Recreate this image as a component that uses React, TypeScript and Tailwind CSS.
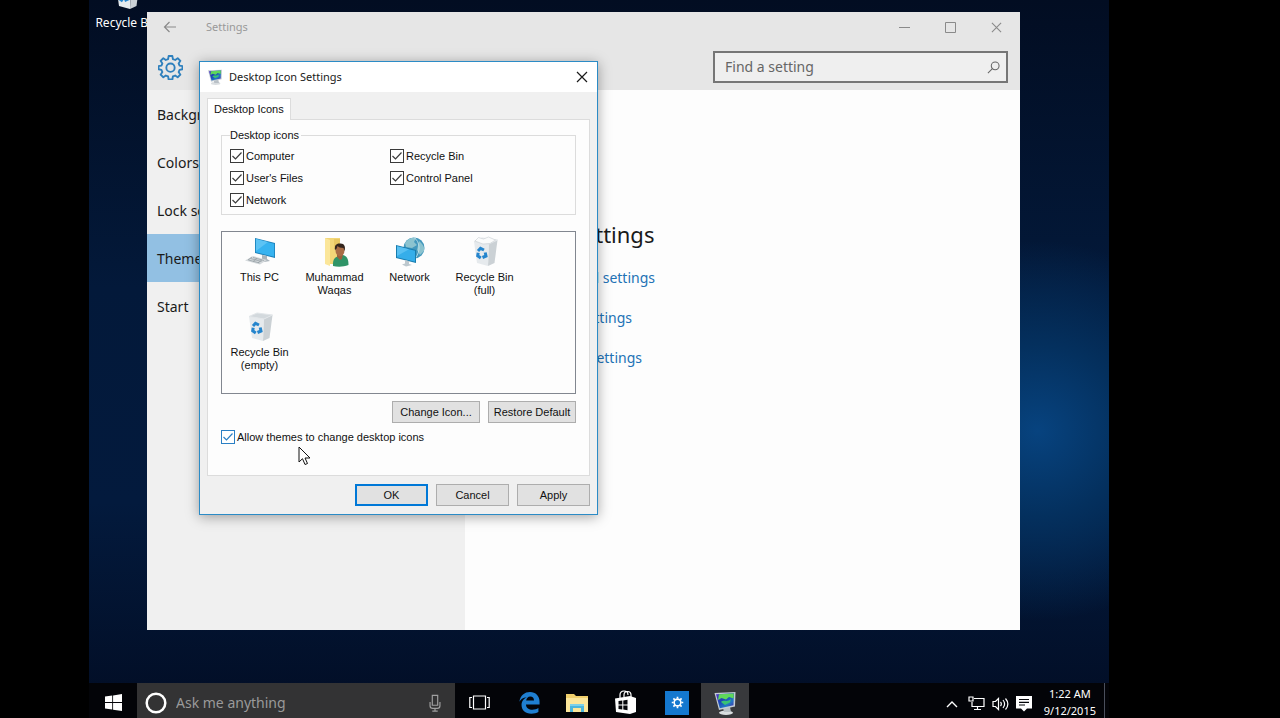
import type { ReactNode } from 'react';

const ui = "font-['Noto_Sans',sans-serif]";
const dlg = "font-['Liberation_Sans',Arial,sans-serif]";

function GearIcon({ className, width = 1.6 }: { className: string; width?: number }) {
  return (
    <svg viewBox="0 0 24 24" className={className} fill="none" stroke="currentColor" strokeWidth={width} strokeLinejoin="round">
      <path d="M10.2 1h3.6l.5 2.9 2.2.9L18.900 3.100l2.600 2.500-1.700 2.500.9 2.100 2.800.5v3.000l-2.800.600-.9 2.100 1.700 2.500-2.600 2.500-2.400-1.700-2.200.9-.5 2.900h-3.600l-.5-2.900-2.200-.9-2.400 1.700-2.600-2.500 1.700-2.500-.9-2.100-2.800-.6v-3l2.800-.5.900-2.100-1.700-2.500 2.600-2.500 2.400 1.700 2.200-.9z" />
      <circle cx="12" cy="12.200" r="4" />
    </svg>
  );
}

function SmallGearIcon({ className }: { className: string }) {
  return (
    <svg viewBox="0 0 14 14" className={className} fill="none" stroke="currentColor">
      <circle cx="7" cy="7" r="3.600" strokeWidth="1.700" />
      <path d="M7 .8v2M7 11.200v2M.8 7h2M11.200 7h2M2.600 2.600l1.500 1.500M9.900 9.900l1.500 1.500M11.400 2.600L9.900 4.100M4.100 9.900l-1.500 1.500" strokeWidth="1.800" />
    </svg>
  );
}

function DisplayIcon({ className }: { className: string }) {
  return (
    <svg viewBox="0 0 24 24" className={className}>
      <defs>
        <linearGradient id="disp" x1="0" y1="0" x2="1" y2="1">
          <stop offset="0" stopColor="#5a35c8" />
          <stop offset=".4" stopColor="#1c46b4" />
          <stop offset=".7" stopColor="#2277c4" />
          <stop offset="1" stopColor="#4a20a4" />
        </linearGradient>
      </defs>
      <ellipse cx="13" cy="21.700" rx="7" ry="2.200" fill="#d9dde0" />
      <path d="M10 17l7-1 1 5h-7z" fill="#b9c0c6" />
      <path d="M1.500 2L22.500 1l-.5 14.500L6 19z" fill="#c3ccd4" />
      <path d="M3 3.200l18-.9-.5 12L6.800 17.300z" fill="url(#disp)" />
      <path d="M6 3.200l14.800-.8-.3 5-4.500-1.400-3 2.500-4.500-1.500L5 9z" fill="#5fd85a" />
      <path d="M8 11c3-3 6 1 10-3l-1 3.500-5 2.500z" fill="#39c274" />
    </svg>
  );
}

function PcIcon() {
  return (
    <svg viewBox="0 0 32 32" className="size-8">
      <path d="M11 2l20 5v15l-20-5z" fill="#1b7fb8" />
      <path d="M11.800 3l18.400 4.700v13l-18.400-4.400z" fill="#37b3f0" />
      <path d="M12 3l12 3-12 9z" fill="#5cc3f4" />
      <path d="M18 19l5 1v3l3 2-6 1-4-2 2-1z" fill="#aab4bb" />
      <path d="M9 20l14 4-7 4.500L1 24.500z" fill="#d4d9dc" />
      <path d="M9 21.500l11 3M6.500 22.500l11 3M4.500 24l11 3M8 21l-4 3M13 22.500l-4 3M18 23.800l-4 3" stroke="#8f999f" strokeWidth=".7" />
    </svg>
  );
}

function UserFolderIcon() {
  return (
    <svg viewBox="0 0 32 32" className="size-8">
      <path d="M6 2h15v26H6z" fill="#f2d678" />
      <path d="M6 2l5 2v26l-5-2z" fill="#fbe69a" />
      <path d="M15 3h6v8h-6z" fill="#e8c762" />
      <path d="M14 30c-.5-7 2-9 6-10l4-1c4 1 5.500 4 5.500 10-5 2-11 2-15.500 1z" fill="#2f9467" />
      <path d="M18 18h6l-1 5-2 1-3-3z" fill="#9a603c" />
      <ellipse cx="21" cy="14.500" rx="4.500" ry="5.800" fill="#a86c45" />
      <path d="M16 14c-1-5 2-7 5-6.500 4-.5 6 3 4.500 7.500l-1-3c-3 0-5-1-6-2-.5 2-1 3-2.500 4z" fill="#33251d" />
    </svg>
  );
}

function NetworkIcon() {
  return (
    <svg viewBox="0 0 32 32" className="size-8">
      <circle cx="20" cy="12" r="10.500" fill="#4398bd" />
      <path d="M11 7c3-5 8-6 11-5l-2 4 3 3-5 3-6-1zM25 5c4 3 6 7 5 10l-4 4-3-5z" fill="#8cc3cf" />
      <path d="M20 1.500c6 4 7 14 1 21" stroke="#c7e6ef" strokeWidth=".8" fill="none" />
      <path d="M2 9l20 5v13L2 22z" fill="#187cad" />
      <path d="M3 10.200l18 4.600v11L3 21.200z" fill="#35aeea" />
      <path d="M3 10.200l12 3L3 20z" fill="#58c0f2" />
      <path d="M11 24l4 1v3l3 1-6 1.500-4-2 3-1z" fill="#bdc8ce" />
    </svg>
  );
}

function BinIcon({ full = false }: { full?: boolean }) {
  return (
    <svg viewBox="0 0 32 32" className="size-8">
      <path d="M5 5.500l15 2.500-1 22-11-3z" fill="#e6eaed" />
      <path d="M20 8l8.500-4-3 23-6.500 3z" fill="#cbd1d5" />
      <path d="M5 5.500l8-3.500 15.500 2-8.500 4z" fill={full ? '#f7f8f9' : '#d3d9dd'} stroke="#e2e6e9" strokeWidth="1" />
      {full && <path d="M6 5l3.500-3.500 5 1.500 5-2 7 3-5.500 3.500-7 .500z" fill="#fafbfb" stroke="#c6cdd2" strokeWidth=".6" />}
      <g fill="none" stroke="#2585cd" strokeWidth="3">
        <path d="M9 15l2.500-2.700 3.500 1.700" />
        <path d="M16.200 16.500l.8 3.500-3.500 1.500" />
        <path d="M11.800 22l-3.100-2.200.5-3" />
      </g>
    </svg>
  );
}

function CloseIcon({ className }: { className: string }) {
  return (
    <svg viewBox="0 0 12 12" className={className} stroke="currentColor" strokeWidth="1.200">
      <path d="M1 1l10 10M11 1L1 11" />
    </svg>
  );
}

function Check({ label, themed = false }: { label: string; themed?: boolean }) {
  return (
    <label className="flex h-4 items-center gap-0.5 whitespace-nowrap">
      <span className="grid size-[14px] shrink-0">
        <input
          type="checkbox"
          defaultChecked
          className={`peer col-start-1 row-start-1 m-0 size-[14px] appearance-none border bg-white ${themed ? 'border-[#2a7fc4]' : 'border-[#3a3a3a]'}`}
        />
        <svg
          viewBox="0 0 14 14"
          className={`pointer-events-none invisible col-start-1 row-start-1 size-[14px] peer-checked:visible ${themed ? 'text-[#2a7fc4]' : 'text-[#3a3a3a]'}`}
          fill="none"
          stroke="currentColor"
          strokeWidth="1.200"
        >
          <path d="M2.500 7l3 3 6-6.500" />
        </svg>
      </span>
      {label}
    </label>
  );
}

function IconTile({ icon, children }: { icon: ReactNode; children: ReactNode }) {
  return (
    <li className="flex h-[75px] w-[75px] flex-col items-center gap-[3px] text-center leading-[13px]">
      {icon}
      <span>{children}</span>
    </li>
  );
}

function DialogButton({ children, className }: { children: ReactNode; className: string }) {
  return <button className={`h-[22px] bg-[#e1e1e1] text-center ${className}`}>{children}</button>;
}

function IconSettingsDialog() {
  return (
    <section
      aria-label="Desktop Icon Settings"
      className={`absolute top-[61px] left-[110px] flex w-[399px] flex-col border border-[#2b8bc6] bg-[#f0f0f0] text-[11px] text-[#111] shadow-[0_2px_12px_rgba(0,0,0,0.35)] ${dlg}`}
    >
      <header className={`flex h-[30px] items-center bg-white px-[7px] text-[#1a1a1a] ${ui}`}>
        <DisplayIcon className="size-4" />
        <h2 className="ml-1.5 flex-1">Desktop Icon Settings</h2>
        <button aria-label="Close" className="px-0.5">
          <CloseIcon className="size-3" />
        </button>
      </header>
      <div className="flex flex-col px-[7px] pt-1.5">
        <div role="tablist" className="flex">
          <button role="tab" aria-selected="true" className="z-10 -mb-px h-[22px] border border-b-0 border-[#dcdcdc] bg-white px-1.5">
            Desktop Icons
          </button>
        </div>
        <div className="flex h-[357px] flex-col border border-[#dcdcdc] bg-[#fdfdfd] px-[13px] pt-[9px]">
          <fieldset className="h-[86px] border border-[#dcdcdc] px-2">
            <legend className="pr-0.5 leading-3">Desktop icons</legend>
            <div className="grid grid-cols-[160px_1fr] gap-y-1.5 pt-[7px]">
              <Check label="Computer" />
              <Check label="Recycle Bin" />
              <Check label="User's Files" />
              <Check label="Control Panel" />
              <Check label="Network" />
            </div>
          </fieldset>
          <ul className="mt-4 flex h-[163px] flex-wrap content-start border border-[#828790] pt-1">
            <IconTile icon={<PcIcon />}>This PC</IconTile>
            <IconTile icon={<UserFolderIcon />}>Muhammad Waqas</IconTile>
            <IconTile icon={<NetworkIcon />}>Network</IconTile>
            <IconTile icon={<BinIcon full />}>Recycle Bin (full)</IconTile>
            <IconTile icon={<BinIcon />}>Recycle Bin (empty)</IconTile>
          </ul>
          <div className="mt-[7px] flex justify-end gap-2">
            <DialogButton className="w-[88px] border border-[#adadad]">Change Icon...</DialogButton>
            <DialogButton className="w-[88px] border border-[#adadad]">Restore Default</DialogButton>
          </div>
          <div className="mt-1.5">
            <Check label="Allow themes to change desktop icons" themed />
          </div>
        </div>
        <footer className="flex justify-end gap-2 py-2">
          <DialogButton className="w-[73px] border-2 border-[#0078d7]">OK</DialogButton>
          <DialogButton className="w-[73px] border border-[#adadad]">Cancel</DialogButton>
          <DialogButton className="w-[73px] border border-[#adadad]">Apply</DialogButton>
        </footer>
      </div>
    </section>
  );
}

const navItems = ['Background', 'Colors', 'Lock screen', 'Themes', 'Start'];

function SettingsWindow() {
  return (
    <section aria-label="Settings" className={`absolute top-3 right-[89px] bottom-[88px] left-[58px] flex flex-col bg-[#fdfdfd] ${ui}`}>
      <header className="flex h-[78px] shrink-0 flex-col bg-[#e6e6e6]">
        <div className="flex h-[30px] items-center text-[#8a8a8a]">
          <button aria-label="Back" className="ml-4">
            <svg viewBox="0 0 14 14" className="size-[14px]" fill="none" stroke="currentColor" strokeWidth="1.200">
              <path d="M13 7H1.500M6.500 2l-5 5 5 5" />
            </svg>
          </button>
          <h1 className="ml-[29px] flex-1 text-[11px] text-[#999]">Settings</h1>
          <div className="flex items-center gap-[35px] pr-[18px]">
            <button aria-label="Minimize">
              <svg viewBox="0 0 11 11" className="size-[11px]" stroke="currentColor">
                <path d="M0 5.500h11" />
              </svg>
            </button>
            <button aria-label="Maximize">
              <svg viewBox="0 0 11 11" className="size-[11px]" fill="none" stroke="currentColor">
                <path d="M.5.5h10v10H.5z" />
              </svg>
            </button>
            <button aria-label="Close">
              <CloseIcon className="size-[11px]" />
            </button>
          </div>
        </div>
        <div className="flex flex-1 items-start justify-between pr-3 pl-[11px]">
          <GearIcon className="mt-[13px] size-[25px] text-[#2f80bd]" width={1.800} />
          <div className="mt-[9px] flex h-8 w-[295px] items-center border-2 border-[#767676] bg-[#efefef] pr-1.5 pl-2.5">
            <input aria-label="Find a setting" placeholder="Find a setting" className="min-w-0 flex-1 bg-transparent text-sm outline-none placeholder:text-[#666]" />
            <svg viewBox="0 0 14 14" className="size-[13px] text-[#666]" fill="none" stroke="currentColor" strokeWidth="1.100">
              <circle cx="8.800" cy="5.200" r="4.200" />
              <path d="M5.800 8.200L1 13" />
            </svg>
          </div>
        </div>
      </header>
      <div className="flex flex-1">
        <nav className="w-[318px] bg-[#f0f0f0] text-sm text-[#1a1a1a]">
          {navItems.map((item) => (
            <a key={item} href="#" className={`flex h-12 items-center px-2.5 pt-0.5 ${item === 'Themes' ? 'bg-[#92c0e3]' : ''}`}>
              {item}
            </a>
          ))}
        </nav>
        <main className="flex flex-1 flex-col items-start pt-32 pl-[22px] text-sm text-[#2372b5]">
          <h2 className="w-[166px] text-right text-[22px] leading-8 whitespace-nowrap text-[#1a1a1a]">Related Settings</h2>
          <a href="#" className="mt-[18px] flex h-5 w-[168px] items-center justify-end whitespace-nowrap">Advanced sound settings</a>
          <a href="#" className="mt-5 flex h-5 w-[145px] items-center justify-end whitespace-nowrap">Desktop icon settings</a>
          <a href="#" className="mt-5 flex h-5 w-[155px] items-center justify-end whitespace-nowrap">Mouse pointer settings</a>
        </main>
      </div>
    </section>
  );
}

function Taskbar() {
  return (
    <footer className={`absolute inset-x-0 bottom-0 flex h-[35px] items-stretch bg-[#030408] text-white ${ui}`}>
      <button aria-label="Start" className="flex w-12 items-center justify-center pt-1">
        <svg viewBox="0 0 16 16" className="size-[17px]" fill="currentColor">
          <path d="M0 2.300L6.800 1.400v6.200H0zM7.600 1.300L16 0v7.600H7.600zM0 8.400h6.800v6.200L0 13.700zM7.600 8.400H16V16l-8.400-1.200z" />
        </svg>
      </button>
      <div className="flex w-[318px] items-center bg-[#333334] pt-1 pr-3 pl-2">
        <svg viewBox="0 0 22 22" className="size-[22px]" fill="none" stroke="currentColor" strokeWidth="2.500">
          <circle cx="11" cy="11" r="9.300" />
        </svg>
        <input aria-label="Ask me anything" placeholder="Ask me anything" className="ml-[9px] min-w-0 flex-1 bg-transparent text-sm outline-none placeholder:text-[#9a9a9a]" />
        <svg viewBox="0 0 16 20" className="h-[18px] w-4 text-[#a0a0a0]" fill="none" stroke="currentColor" strokeWidth="1.300">
          <path d="M5 1.500h6v11H5zM2.500 9v4c0 2 1.500 3 3 3h5c1.500 0 3-1 3-3V9M8 16v3M5 19h6" />
        </svg>
      </div>
      <div className="flex items-stretch">
        <button aria-label="Task View" className="flex w-12 items-center justify-center pt-1">
          <svg viewBox="0 0 21 15" className="h-[15px] w-[21px]" fill="none" stroke="currentColor" strokeWidth="1.200">
            <path d="M4.500 1h12v13h-12zM3 2.500H.8v10H3M18 2.500h2.200v10H18" />
          </svg>
        </button>
        <button aria-label="Edge" className="flex w-[52px] items-center justify-center pt-1">
          <svg viewBox="0 0 24 24" className="size-[23px]" fill="#1f7fd1">
            <path d="M1.500 11.200C2.300 4.500 7 1 12.500 1 18.500 1 22.500 5.300 22.500 11v3H8.300c.2 4 3.300 5.500 6.600 5.500 2.500 0 4.600-.7 6.400-1.800v4.300c-2 1.100-4.500 1.700-7.400 1.700-6.500 0-10.200-3.900-10.200-9 0-4 2.300-7 5.600-8.300C4.800 6.800 2.600 8.800 1.500 11.200zM8.500 10h8.200c0-2.600-1.500-4.200-3.900-4.200S8.900 7.600 8.500 10z" />
          </svg>
        </button>
        <button aria-label="File Explorer" className="flex w-11 items-center justify-center pt-1">
          <svg viewBox="0 0 22 20" className="h-5 w-[22px]">
            <path d="M0 1h8l2 2h12v16H0z" fill="#f0cf6c" />
            <path d="M0 5h22v14H0z" fill="#fbe69b" />
            <path d="M4 11h14v8h-3v-4H7v4H4z" fill="#4bb5dc" />
            <path d="M4 11h14v2H4z" fill="#7bd0ea" />
          </svg>
        </button>
        <button aria-label="Store" className="flex w-[54px] items-center justify-center pt-0.5">
          <svg viewBox="0 0 22 24" className="h-6 w-[22px]">
            <path d="M5 8V5c0-2.500 1.500-4 4-4s4 1.500 4 4M9 7V5c0-2 1.500-3.500 3.500-3.500S16 3 16 5v2" fill="none" stroke="#fff" strokeWidth="1.200" />
            <path d="M0 8.500L15 6v18L1 22zM15 6l6 2v14l-6 2z" fill="#fff" />
            <path d="M3.500 11l3.800-.5v4H3.500zM8.300 10.400l4.200-.6v4.700H8.300zM3.500 15.500h3.800v4l-3.800-.5zM8.300 15.500h4.200v4.700l-4.200-.6z" fill="#05060a" />
          </svg>
        </button>
        <button aria-label="Settings" className="flex w-12 items-center justify-center pt-1">
          <span className="flex size-6 items-center justify-center bg-[#1478cf]">
            <SmallGearIcon className="size-[13px]" />
          </span>
        </button>
        <button aria-label="Desktop Icon Settings" className="flex w-12 items-center justify-center bg-[#38393c] pt-1">
          <DisplayIcon className="size-6" />
        </button>
      </div>
      <div className="mr-1 ml-auto flex items-center border-r border-[#4a4f5c] pt-0.5 pr-2">
        <div className="flex items-center pt-1">
          <svg viewBox="0 0 12 8" className="h-2 w-3" fill="none" stroke="currentColor" strokeWidth="1.400">
            <path d="M1 7l5-5 5 5" />
          </svg>
          <svg viewBox="0 0 17 15" className="ml-2.5 h-[15px] w-[17px]" fill="none" stroke="currentColor" strokeWidth="1.200">
            <path d="M6 2.500h10v8H4V6M9.500 10.500v3M6 13.500h7M1 1h4v4H1z" />
          </svg>
          <svg viewBox="0 0 17 14" className="ml-[7px] h-[14px] w-[17px]" fill="none" stroke="currentColor" strokeWidth="1.200">
            <path d="M1 4.500h2.500l3-3v11l-3-3H1zM8.500 5c1 1.200 1 2.800 0 4M11 3c2 2.500 2 5.500 0 8M13.500 1.500c3 3.500 3 7.500 0 11" />
          </svg>
          <svg viewBox="0 0 16 16" className="ml-[7px] size-4">
            <path d="M0 0h16v12.500h-5L8 15.500l-3-3H0z" fill="#fff" />
            <path d="M3 3.500h10M3 6.300h10M3 9h6" stroke="#05060a" strokeWidth="1.200" />
          </svg>
        </div>
        <div className="ml-3 text-center text-[11px] leading-[17px]">
          <div>1:22 AM</div>
          <div>9/12/2015</div>
        </div>
      </div>
    </footer>
  );
}

export default function App() {
  return (
    <div className="h-screen overflow-hidden bg-black pr-[171px] pl-[89px]">
      <div className="relative h-full overflow-hidden bg-[#021129] bg-[radial-gradient(ellipse_200px_190px_at_93%_60%,#07437f,#04305e_45%,transparent),linear-gradient(180deg,#020d22,#03193a_40%,#031a3d_70%,#020d24)]">
        <div className={`absolute -top-[21px] left-0 flex w-[76px] flex-col items-center text-xs whitespace-nowrap text-white ${ui}`}>
          <BinIcon />
          <span className="mt-1">Recycle Bin</span>
        </div>
        <SettingsWindow />
        <IconSettingsDialog />
        <svg viewBox="0 0 13 20" className="pointer-events-none absolute top-[446px] left-[209px] h-5 w-[13px]">
          <path d="M1 1v15l3.500-3.300L7 18.500l2.500-1-2.500-5.500h5z" fill="#fff" stroke="#111" />
        </svg>
        <Taskbar />
      </div>
    </div>
  );
}
